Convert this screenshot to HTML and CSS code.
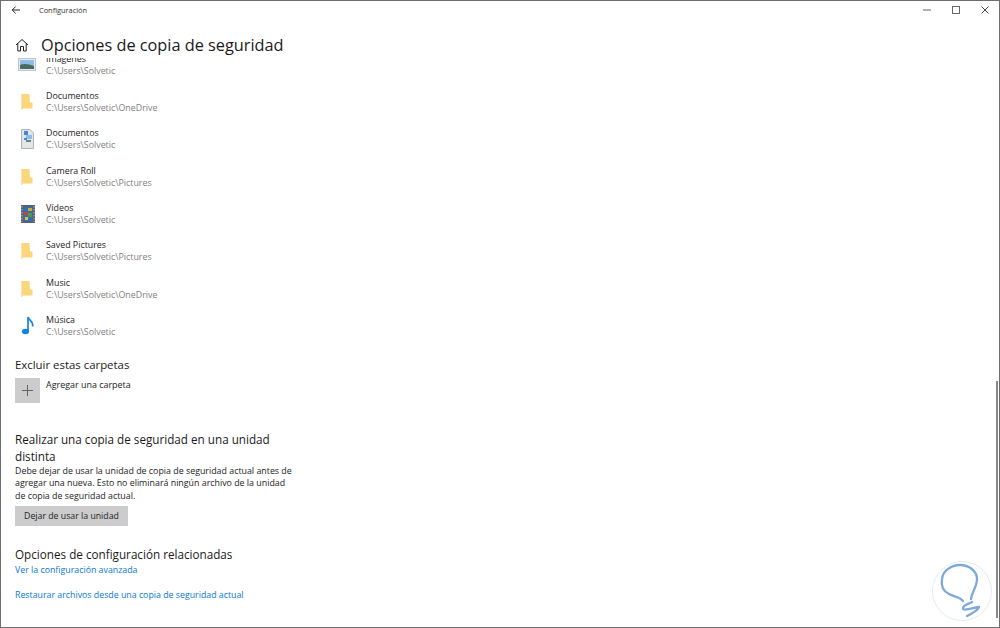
FILE: index.html
```html
<!DOCTYPE html>
<html lang="es">
<head>
<meta charset="utf-8">
<title>Configuración</title>
<link rel="stylesheet" href="styles.css">
</head>
<body>
<div class="window">
  <header class="titlebar">
    <svg class="back" viewBox="0 0 10 10" width="10" height="10"><path d="M9 5H1.200M4.600 1.600 1.200 5l3.400 3.400" fill="none" stroke="#222" stroke-width="1"/></svg>
    <span class="apptitle">Configuración</span>
    <div class="controls">
      <svg viewBox="0 0 10 10" width="10" height="10"><path d="M1 5h8" stroke="#666" stroke-width="1"/></svg>
      <svg viewBox="0 0 10 10" width="10" height="10"><rect x="1.500" y="1.500" width="7" height="7" fill="none" stroke="#666" stroke-width="1"/></svg>
      <svg viewBox="0 0 10 10" width="10" height="10"><path d="M1.500 1.500l7 7M8.500 1.500l-7 7" stroke="#444" stroke-width="1"/></svg>
    </div>
  </header>
  <div class="pagehead">
    <svg class="home" viewBox="0 0 14 14" width="14" height="14"><path d="M1 7 7 1.500 13 7M2.800 5.500V13H5.500V8.500H8.500V13H11.200V5.500" fill="none" stroke="#222" stroke-width="1"/></svg>
    <h1>Opciones de copia de seguridad</h1>
  </div>
  <main class="content">
    <ul class="folders">
      <li class="folder">
        <svg class="ficon" viewBox="0 0 18 14" width="18" height="14"><rect x=".5" y=".5" width="17" height="12" fill="#e6ebf1" stroke="#bcc3cc"/><rect x="2" y="2" width="14" height="9" fill="#8fbde8"/><path d="M2 7c4-2 9-1 14 1v3H2z" fill="#4a6a60"/></svg>
        <div class="ftext"><span class="fname">Imágenes</span><span class="fpath">C:\Users\Solvetic</span></div>
      </li>
      <li class="folder">
        <svg class="ficon" viewBox="0 0 18 18" width="18" height="18"><use href="#folder"/></svg>
        <div class="ftext"><span class="fname">Documentos</span><span class="fpath">C:\Users\Solvetic\OneDrive</span></div>
      </li>
      <li class="folder">
        <svg class="ficon" viewBox="0 0 18 22" width="18" height="22"><path d="M3.500 1.500H12l3.500 3.500v15.500h-12z" fill="#e2e4e6" stroke="#b0b4b8"/><rect x="6" y="3" width="4" height="4" fill="#3f8ad8"/><rect x="8" y="7" width="6" height="4" fill="#8bbce8"/><rect x="6" y="10" width="3" height="2" fill="#3f8ad8"/><path d="M8 13h5" stroke="#3d6b5a" stroke-width="1.500"/></svg>
        <div class="ftext"><span class="fname">Documentos</span><span class="fpath">C:\Users\Solvetic</span></div>
      </li>
      <li class="folder">
        <svg class="ficon" viewBox="0 0 18 18" width="18" height="18"><use href="#folder"/></svg>
        <div class="ftext"><span class="fname">Camera Roll</span><span class="fpath">C:\Users\Solvetic\Pictures</span></div>
      </li>
      <li class="folder">
        <svg class="ficon" viewBox="0 0 18 18" width="18" height="18"><rect x="3" width="14" height="18" fill="#5a6068"/><path d="M4 1v16M16 1v16" stroke="#b8bcc0" stroke-width="1" stroke-dasharray="1.500 1.500"/><rect x="5.500" y="2" width="9" height="14" fill="#2f6fc0"/><rect x="10" y="3" width="4" height="3" fill="#d9a62e"/><rect x="6" y="7" width="4" height="3" fill="#c8452f"/><rect x="10" y="8" width="4" height="4" fill="#4f9a45"/><rect x="7" y="12" width="3" height="3" fill="#e0c23c"/></svg>
        <div class="ftext"><span class="fname">Vídeos</span><span class="fpath">C:\Users\Solvetic</span></div>
      </li>
      <li class="folder">
        <svg class="ficon" viewBox="0 0 18 18" width="18" height="18"><use href="#folder"/></svg>
        <div class="ftext"><span class="fname">Saved Pictures</span><span class="fpath">C:\Users\Solvetic\Pictures</span></div>
      </li>
      <li class="folder">
        <svg class="ficon" viewBox="0 0 18 18" width="18" height="18"><use href="#folder"/></svg>
        <div class="ftext"><span class="fname">Music</span><span class="fpath">C:\Users\Solvetic\OneDrive</span></div>
      </li>
      <li class="folder">
        <svg class="ficon" viewBox="0 0 18 20" width="18" height="20"><ellipse cx="7.500" cy="15.500" rx="3.600" ry="2.800" fill="#1584e0"/><path d="M10 15.500V1c.6 3.500 6 4.500 4.500 9.500" fill="none" stroke="#1584e0" stroke-width="1.700"/></svg>
        <div class="ftext"><span class="fname">Música</span><span class="fpath">C:\Users\Solvetic</span></div>
      </li>
    </ul>
    <h2 class="sec exclude">Excluir estas carpetas</h2>
    <div class="addrow">
      <span class="addbtn"><svg viewBox="0 0 11 11" width="11" height="11"><path d="M5.500 0v11M0 5.500h11" stroke="#666" stroke-width="1"/></svg></span>
      <span class="addlabel">Agregar una carpeta</span>
    </div>
    <h2 class="sec other">Realizar una copia de seguridad en una unidad distinta</h2>
    <p class="desc">Debe dejar de usar la unidad de copia de seguridad actual antes de agregar una nueva. Esto no eliminará ningún archivo de la unidad de copia de seguridad actual.</p>
    <button class="stop">Dejar de usar la unidad</button>
    <h2 class="sec related">Opciones de configuración relacionadas</h2>
    <a class="link first">Ver la configuración avanzada</a>
    <a class="link">Restaurar archivos desde una copia de seguridad actual</a>
  </main>
  <div class="scrollbar"></div>
  <svg class="watermark" viewBox="0 0 60 60" width="60" height="60"><circle cx="30" cy="30" r="29.500" fill="#fff" stroke="#e3ebf5"/><path d="M31 40C27 35 22 36 17 33 11 30 9 24 10 18 11 9 20 4 28 4 37 4 45 10 45 18 45 26 40 30 39 38M40 41C37 43 30 44 31 48 33 50 40 47 47 46 46 50 40 52 35 55" fill="none" stroke="#7ea8da" stroke-width="2.300" stroke-linecap="round" stroke-linejoin="round"/></svg>
</div>
<svg class="defs" width="0" height="0"><defs><g id="folder"><path d="M3.500 1H11.500L12 9.500H14.500V15.500H5L4 17H3.500z" fill="#fcd67d"/><path d="M3.500 1V17" stroke="#f8e3ae" stroke-width="1"/></g></defs></svg>
</body>
</html>
```
FILE: styles.css
```css
* { box-sizing: border-box; }
html, body { margin: 0; height: 100%; background: #fff; }
body { font-family: "Open Sans", "Noto Sans", sans-serif; color: #1a1a1a; overflow: hidden; }
.defs { display: block; height: 0; }
.window { position: relative; width: 1000px; height: 628px; border: 1px solid #6e6e6e; display: flex; flex-direction: column; overflow: hidden; background: #fff; }
.titlebar { height: 18px; display: flex; align-items: center; padding-left: 10px; flex: none; }
.back { flex: none; }
.apptitle { margin-left: 18px; font-size: 7.400px; color: #333; }
.controls { margin-left: auto; display: flex; gap: 19px; padding-right: 9px; align-items: center; }
.pagehead { height: 39px; display: flex; align-items: center; flex: none; padding: 13px 0 0 14px; }
.home { flex: none; }
h1 { margin: 0 0 0 12px; font-size: 16.300px; line-height: 18px; font-weight: 400; color: #1a1a1a; }
.content { flex: 1; overflow: hidden; padding-left: 14px; min-height: 0; }
.folders { list-style: none; margin: -12px 0 0; padding: 0; }
.folder { height: 37.330px; display: grid; grid-template-columns: 31px 1fr; align-items: center; }
.ficon { margin-left: 3px; }
.ftext { display: flex; flex-direction: column; }
.fname { font-size: 8.850px; line-height: 12px; color: #222; }
.fpath { font-size: 8.850px; line-height: 12px; color: #808080; }
.sec { margin: 0; font-size: 11.700px; font-weight: 400; line-height: 17px; color: #1a1a1a; }
.exclude { margin-top: 11.500px; font-size: 11.400px; }
.addrow { display: flex; margin-top: 4.500px; }
.addbtn { width: 25px; height: 25px; background: #ccc; display: flex; align-items: center; justify-content: center; }
.addlabel { margin: 1.500px 0 0 6px; font-size: 8.950px; line-height: 12px; color: #222; }
.other { margin-top: 28px; width: 280px; }
.desc { margin: 0; width: 279px; font-size: 8.850px; line-height: 12.500px; color: #222; }
.stop { display: block; margin: 4px 0 0; width: 113px; height: 20px; border: 0; padding: 0; background: #ccc; font: inherit; font-size: 8.750px; color: #222; }
.related { margin-top: 20px; }
.link { display: block; font-size: 8.800px; line-height: 12px; color: #0a78d2; }
.link.first { margin-top: 1px; margin-bottom: 13px; }
.scrollbar { position: absolute; right: 1px; top: 380px; width: 2px; height: 237px; background: #8a8a8a; }
.watermark { position: absolute; left: 931px; top: 560px; }
```
